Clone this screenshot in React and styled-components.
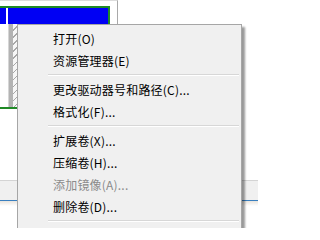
import React from "react";
import styled, { createGlobalStyle } from "styled-components";

const GlobalStyle = createGlobalStyle`
  html, body {
    margin: 0;
    padding: 0;
    width: 258px;
    height: 228px;
    overflow: hidden;
    background: #ffffff;
  }
  #root {
    width: 258px;
    height: 228px;
  }
`;

const Screen = styled.div`
  position: relative;
  width: 258px;
  height: 228px;
  overflow: hidden;
  background: #ffffff;
  display: flex;
  flex-direction: column;
  font-family: "Noto Sans CJK SC", "Microsoft YaHei", sans-serif;
`;

const Workspace = styled.div`
  flex: 0 0 180px;
  display: flex;
  background: #ffffff;
`;

const DiskPane = styled.div`
  width: 118px;
  border-right: 1px solid #a9a9a9;
  border-top: 1px solid #dcdcdc;
  padding-top: 5px;
  box-sizing: border-box;
  display: flex;
  flex-direction: column;
  background: #ffffff;
`;

const SelectedPartition = styled.div`
  width: 110px;
  height: 103px;
  box-sizing: border-box;
  border: 2px solid #1f8a26;
  border-left: none;
  display: flex;
  gap: 2px;
  background: #ffffff;
`;

const Volume = styled.div`
  display: flex;
  flex-direction: column;
  flex: ${(p) => (p.$grow ? "1 1 auto" : `0 0 ${p.$w}px`)};
`;

const VolumeHeader = styled.div`
  height: 16px;
  background: #0000f4;
  flex: 0 0 16px;
`;

const VolumeBody = styled.div`
  flex: 1 1 auto;
  display: flex;
  background: #ffffff;
`;

const Stripe = styled.div`
  width: 4px;
  background: #b3b3b3;
  border-left: 1px solid #d6d6d6;
`;

const Hatch = styled.div`
  flex: 1 1 auto;
  background: repeating-linear-gradient(
    135deg,
    #f7f7f7 0px,
    #f7f7f7 4px,
    #a8a8a8 4px,
    #a8a8a8 5px
  );
`;

const StatusArea = styled.div`
  flex: 0 0 21px;
  box-sizing: border-box;
  background: #f0f0f0;
  border-top: 1px solid #d4d4d4;
  border-bottom: 1px solid #3a7fbf;
`;

const Footer = styled.div`
  flex: 1 1 auto;
  background: linear-gradient(#e9e3dc 0px, #ffffff 5px);
`;

const Menu = styled.div`
  position: absolute;
  left: 17px;
  top: 24px;
  width: 225px;
  height: 230px;
  box-sizing: border-box;
  background: #f0f0f0;
  border: 1px solid #a6a6a6;
  padding: 2px;
  box-shadow: 3px 3px 2px rgba(0, 0, 0, 0.4);
`;

const Item = styled.div`
  height: 22px;
  display: flex;
  align-items: center;
  padding-left: 33px;
  font-size: 12px;
  letter-spacing: 0.2px;
  color: ${(p) => (p.$disabled ? "#8b8b8b" : "#000000")};
  white-space: nowrap;
`;

const Separator = styled.div`
  height: 0;
  margin: 3px 0 2px 28px;
  border-top: 1px solid #d7d7d7;
  border-bottom: 1px solid #ffffff;
`;

const groups = [
  [{ label: "打开(O)" }, { label: "资源管理器(E)" }],
  [{ label: "更改驱动器号和路径(C)..." }, { label: "格式化(F)..." }],
  [
    { label: "扩展卷(X)..." },
    { label: "压缩卷(H)..." },
    { label: "添加镜像(A)...", disabled: true },
    { label: "删除卷(D)..." },
  ],
  [],
];

export default function App() {
  return (
    <>
      <GlobalStyle />
      <Screen>
        <Workspace>
          <DiskPane>
            <SelectedPartition>
              <Volume $w={6}>
                <VolumeHeader />
                <VolumeBody />
              </Volume>
              <Volume $grow>
                <VolumeHeader />
                <VolumeBody>
                  <Stripe />
                  <Hatch />
                </VolumeBody>
              </Volume>
            </SelectedPartition>
          </DiskPane>
        </Workspace>
        <StatusArea />
        <Footer />
        <Menu>
          {groups.map((g, gi) => (
            <React.Fragment key={gi}>
              {gi > 0 && <Separator />}
              {g.map((it) => (
                <Item key={it.label} $disabled={it.disabled}>
                  {it.label}
                </Item>
              ))}
            </React.Fragment>
          ))}
        </Menu>
      </Screen>
    </>
  );
}
